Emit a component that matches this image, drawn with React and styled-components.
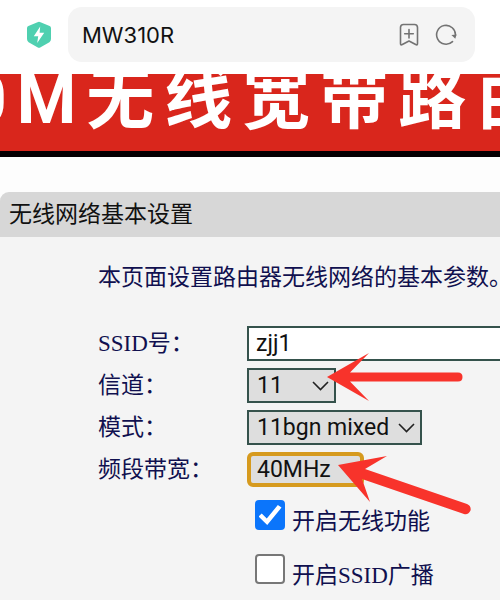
import React from 'react';
import styled, { createGlobalStyle } from 'styled-components';

const GlobalStyle = createGlobalStyle`
  * {
    box-sizing: border-box;
  }

  body {
    margin: 0;
    background: #fdfdfd;
    color: #111;
    font-family: 'Liberation Serif', 'Noto Sans CJK SC', serif;
    font-size: 23px;
    overflow: hidden;
  }
`;

// Browser chrome
const AddressBar = styled.header`
  display: flex;
  align-items: center;
  gap: 16px;
  padding: 7px 25px 12px 26px;
  background: #fff;
`;

const AddressField = styled.div`
  flex: 1;
  display: flex;
  align-items: center;
  gap: 16px;
  height: 55px;
  padding: 0 18px 0 14px;
  border-radius: 14px;
  background: #f4f4f4;
`;

const PageTitle = styled.span`
  flex: 1;
  font-family: Inter, 'Liberation Sans', sans-serif;
  font-size: 22px;
`;

const IconButton = styled.button`
  display: flex;
  padding: 0;
  border: 0;
  background: none;
  color: #737373;
`;

// Router page
const Banner = styled.div`
  display: flex;
  justify-content: center;
  padding: 0 0 25px 22px;
  border-bottom: 6px solid #050002;
  background: #d9261c;
  color: #fff;
  font-family: Roboto, 'Noto Sans CJK SC', sans-serif;
  font-size: 68px;
  font-weight: bold;
  line-height: 52px;
  white-space: nowrap;
  overflow: hidden;
`;

const BannerText = styled.span`
  letter-spacing: 10px;
`;

const Panel = styled.main`
  margin-top: 35px;
  min-height: calc(100vh - 192px);
  border-top-left-radius: 9px;
  background: #f4f4f4;
  color: #10104f;
  overflow: hidden;
`;

const PanelTitle = styled.h1`
  margin: 0;
  padding: 0 9px;
  background: #d7d7d7;
  color: #111;
  font-size: 23px;
  font-weight: normal;
  line-height: 45px;
`;

const Form = styled.form`
  padding: 24px 0 16px 98px;
`;

const Intro = styled.p`
  margin: 0 0 32px;
  line-height: 33px;
  white-space: nowrap;
`;

const Row = styled.div`
  display: grid;
  grid-template-columns: 149px 1fr;
  align-items: center;
  margin-bottom: 7px;
`;

const Label = styled.label`
  line-height: 35px;
`;

const TextInput = styled.input`
  width: 100%;
  height: 35px;
  padding: 0 7px;
  border: 2px solid #35524c;
  border-right: 0;
  border-radius: 0;
  outline: 0;
  background: #fff;
  color: #111;
  font-family: Roboto, sans-serif;
  font-size: 23px;
`;

const SelectBox = styled.div`
  position: relative;
  justify-self: start;
  width: ${(props) => props.$width}px;
`;

const Select = styled.select`
  display: block;
  appearance: none;
  width: 100%;
  height: 35px;
  padding: 0 ${(props) => (props.$focused ? 6 : 8)}px;
  border: ${(props) => (props.$focused ? '4px solid #d69a1e' : '2px solid #35524c')};
  border-radius: ${(props) => (props.$focused ? 6 : 0)}px;
  outline: 0;
  background: #dedede;
  color: #111;
  font-family: Roboto, sans-serif;
  font-size: 23px;
`;

const Chevron = styled.svg`
  position: absolute;
  top: 13px;
  right: 7px;
  pointer-events: none;
`;

const Arrow = styled.svg`
  position: absolute;
  top: ${(props) => props.$top}px;
  left: ${(props) => props.$left}px;
  z-index: 1;
  pointer-events: none;
`;

const Checks = styled.div`
  padding: 6px 0 0 157px;
`;

const CheckRow = styled.div`
  display: flex;
  align-items: flex-start;
  gap: 7px;
  height: 54px;
`;

const Checkbox = styled.input`
  appearance: none;
  flex: none;
  display: grid;
  place-items: center;
  width: 30px;
  height: 30px;
  margin: 0;
  border: 2px solid #777;
  border-radius: 4px;
  background: #fff;

  &:checked {
    border-color: #0b75fb;
    background: #0b75fb;
  }

  &:checked::before {
    content: '';
    width: 23px;
    height: 20px;
    background: #fff;
    clip-path: polygon(0 57%, 14% 43%, 36% 68%, 84% 0, 100% 13%, 38% 100%);
  }
`;

const CheckLabel = styled.label`
  padding-top: 5px;
  line-height: 33px;
`;

const ShieldIcon = () => (
  <svg width="26" height="28" viewBox="0 0 26 28" aria-hidden="true">
    <path
      d="M11.5 1.3 Q13 .4 14.5 1.3 L23.6 5 Q25 5.6 25 7.2 V18 Q25 20 23.4 21.2 L14.6 26.2 Q13 27.4 11.4 26.2 L2.6 21.2 Q1 20 1 18 V7.2 Q1 5.6 2.4 5 Z"
      fill="#4fd0b0"
    />
    <path d="M14.2 5.5 L7.8 15.2 H12.2 L11.2 22 L18.2 11.8 H13.6 Z" fill="#fff" />
  </svg>
);

const BookmarkIcon = () => (
  <svg width="20" height="24" viewBox="0 0 20 24" fill="none" stroke="currentColor" strokeWidth="1.6" aria-hidden="true">
    <path
      d="M4.5 1.500 H15.5 Q18.5 1.500 18.5 4.500 V20.5 Q18.5 22.6 16.7 21.5 L10 18 L3.3 21.5 Q1.5 22.6 1.5 20.5 V4.500 Q1.5 1.500 4.5 1.500 Z M10 6.5 V15 M5.7 10.7 H14.3"
      strokeLinecap="round"
      strokeLinejoin="round"
    />
  </svg>
);

const ReloadIcon = () => (
  <svg width="22" height="22" viewBox="0 0 22 22" fill="none" stroke="currentColor" strokeWidth="1.6" aria-hidden="true">
    <path d="M17.5 17.6 A9.4 9.4 0 1 1 20.4 11.5" strokeLinecap="round" />
    <path d="M16.4 11 L21.6 10.5 L20.3 14.8 Z" fill="currentColor" stroke="none" />
  </svg>
);

const SelectField = ({ id, label, value, width, focused, chevron = true, children }) => (
  <Row>
    <Label htmlFor={id}>{label}</Label>
    <SelectBox $width={width}>
      <Select id={id} defaultValue={value} $focused={focused}>
        <option>{value}</option>
      </Select>
      {chevron && (
        <Chevron width="17" height="10" viewBox="0 0 17 10" fill="none" stroke="#222" strokeWidth="1.6">
          <path d="M1 1 L8.5 8.5 L16 1" />
        </Chevron>
      )}
      {children}
    </SelectBox>
  </Row>
);

const CheckField = ({ id, label, checked }) => (
  <CheckRow>
    <Checkbox type="checkbox" id={id} defaultChecked={checked} />
    <CheckLabel htmlFor={id}>{label}</CheckLabel>
  </CheckRow>
);

const App = () => {
  return (
    <>
      <GlobalStyle />
      <AddressBar>
        <ShieldIcon />
        <AddressField>
          <PageTitle>MW310R</PageTitle>
          <IconButton type="button" aria-label="Bookmark">
            <BookmarkIcon />
          </IconButton>
          <IconButton type="button" aria-label="Reload">
            <ReloadIcon />
          </IconButton>
        </AddressField>
      </AddressBar>

      <Banner>
        <BannerText>0M无线宽带路由</BannerText>
      </Banner>

      <Panel>
        <PanelTitle>无线网络基本设置</PanelTitle>
        <Form>
          <Intro>本页面设置路由器无线网络的基本参数。</Intro>
          <Row>
            <Label htmlFor="ssid">SSID号：</Label>
            <TextInput id="ssid" type="text" defaultValue="zjj1" />
          </Row>
          <SelectField id="channel" label="信道：" value="11" width={89}>
            <Arrow $top={-16} $left={79} width="138" height="50" viewBox="0 0 138 50">
              <path
                d="M1 25 L43 1 L24 20.5 H132 Q136.5 20.5 136.5 25 Q136.5 29.5 132 29.5 H24 L43 49 Z"
                fill="#f8332b"
              />
            </Arrow>
          </SelectField>
          <SelectField id="mode" label="模式：" value="11bgn mixed" width={175} />
          <SelectField id="bandwidth" label="频段带宽：" value="40MHz" width={117} focused chevron={false}>
            <Arrow $top={3} $left={90} width="136" height="62" viewBox="0 0 136 62">
              <path
                d="M1 10 L50 1 L28 14 L130 49 Q134.5 51 133.5 55.5 Q131.5 60 127 59 L25 24 L33 47 Z"
                fill="#f8332b"
              />
            </Arrow>
          </SelectField>
          <Checks>
            <CheckField id="wireless" label="开启无线功能" checked />
            <CheckField id="broadcast" label="开启SSID广播" />
          </Checks>
        </Form>
      </Panel>
    </>
  );
};

export default App;
